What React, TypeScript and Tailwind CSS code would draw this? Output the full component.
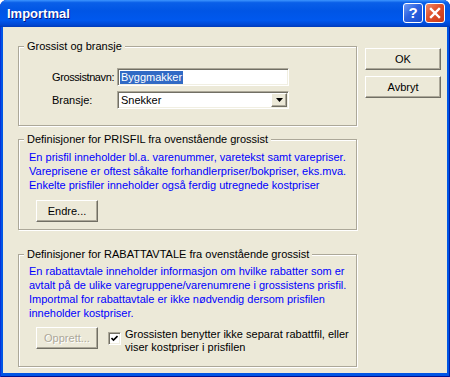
import React from 'react';

const face = 'bg-[#ECE9D8]';
const raised =
  'border border-t-white border-l-white border-b-[#716F64] border-r-[#716F64] shadow-[inset_-1px_-1px_0_#ACA899] bg-[#ECE9D8]';
const sunken =
  'border border-t-[#ACA899] border-l-[#ACA899] border-b-white border-r-white shadow-[inset_1px_1px_0_#716F64,inset_-1px_-1px_0_#F1EFE2] bg-white';

const Legend: React.FC<{ children: React.ReactNode }> = ({ children }) => (
  <span className={`-mt-[8px] ml-[5px] self-start px-[3px] leading-[14px] whitespace-nowrap ${face}`}>
    {children}
  </span>
);

const GroupBox: React.FC<{ label: React.ReactNode; className?: string; children: React.ReactNode }> = ({
  label,
  className = '',
  children,
}) => (
  <div
    className={`flex flex-col border border-[#ACA899] shadow-[inset_1px_1px_0_#fff,1px_1px_0_#fff] ${className}`}
  >
    <Legend>{label}</Legend>
    {children}
  </div>
);

const Button: React.FC<{ children: React.ReactNode; className?: string; disabled?: boolean }> = ({
  children,
  className = '',
  disabled,
}) => (
  <div
    className={`flex items-center justify-center h-[22px] ${raised} ${className} ${
      disabled ? 'text-[#ACA899] [text-shadow:1px_1px_0_#fff]' : 'text-black'
    }`}
  >
    {children}
  </div>
);

const TitleButton: React.FC<{ kind: 'help' | 'close' }> = ({ kind }) => (
  <div
    className={`w-[20px] h-[20px] rounded-[3px] border border-white flex items-center justify-center ${
      kind === 'help'
        ? 'bg-[linear-gradient(135deg,#6F9BF5_0%,#2D62E0_45%,#1A4ED0_100%)]'
        : 'bg-[linear-gradient(135deg,#F08B6A_0%,#E0502A_45%,#C8391A_100%)]'
    }`}
  >
    {kind === 'help' ? (
      <span className="text-white font-bold text-[15px] leading-none font-['Liberation_Sans',sans-serif]">?</span>
    ) : (
      <svg width="12" height="12" viewBox="0 0 12 12">
        <path d="M2 2 L10 10 M10 2 L2 10" stroke="white" strokeWidth="2.4" strokeLinecap="square" />
      </svg>
    )}
  </div>
);

export default function App() {
  return (
    <div className="w-[450px] h-[377px] flex flex-col rounded-t-[7px] overflow-hidden bg-[#0055E5] shadow-[inset_1px_0_0_#0831D9,inset_-1px_0_0_#001EA0,inset_0_-1px_0_#001090] font-['Liberation_Sans',Arial,sans-serif] text-[11px] text-black">
      {/* Title bar */}
      <div className="h-[27px] shrink-0 flex items-center pl-[7px] pr-[5px] bg-[linear-gradient(to_bottom,#3D95FF_0%,#0A5FE8_10%,#0055E5_40%,#0058EE_75%,#0047D3_92%,#003AB8_100%)]">
        <span className="text-white font-bold text-[13px] [text-shadow:1px_1px_0_#0A1883] flex-1">Importmal</span>
        <div className="flex gap-[2px] -mt-[2px]">
          <TitleButton kind="help" />
          <TitleButton kind="close" />
        </div>
      </div>

      {/* Client area */}
      <div className={`flex flex-1 mx-[3px] mb-[4px] pl-[15px] pt-[19px] ${face}`}>
        <div className="w-[339px] flex flex-col">
          <GroupBox label="Grossist og bransje" className="pb-[16px]">
            <div className="mt-[15px] pl-[33px] flex flex-col gap-[5px]">
              <div className="flex items-center">
                <span className="w-[65px] shrink-0 tracking-[-0.4px] whitespace-nowrap">Grossistnavn:</span>
                <div className={`w-[172px] h-[18px] flex items-center pl-[2px] ${sunken}`}>
                  <span className="bg-[#316AC5] text-white px-[1px] leading-[13px]">Byggmakker</span>
                </div>
              </div>
              <div className="flex items-center">
                <span className="w-[65px] shrink-0">Bransje:</span>
                <div className={`w-[172px] h-[18px] flex items-center pl-[3px] pr-[1px] ${sunken}`}>
                  <span className="flex-1">Snekker</span>
                  <div className={`w-[16px] h-[14px] flex items-center justify-center ${raised}`}>
                    <svg width="7" height="4" viewBox="0 0 7 4">
                      <polygon points="0,0 7,0 3.5,4" fill="black" />
                    </svg>
                  </div>
                </div>
              </div>
            </div>
          </GroupBox>

          <GroupBox label="Definisjoner for PRISFIL fra ovenstående grossist" className="mt-[13px] pb-[7px]">
            <p className="mt-[4px] pl-[10px] text-[#0000FF] leading-[14px] whitespace-nowrap">
              En prisfil inneholder bl.a. varenummer, varetekst samt varepriser.
              <br />
              Vareprisene er oftest såkalte forhandlerpriser/bokpriser, eks.mva.
              <br />
              Enkelte prisfiler inneholder også ferdig utregnede kostpriser
            </p>
            <div className="mt-[8px] pl-[17px]">
              <Button className="w-[62px]">Endre...</Button>
            </div>
          </GroupBox>

          <GroupBox label="Definisjoner for RABATTAVTALE fra ovenstående grossist" className="mt-[24px] pb-[12px]">
            <p className="mt-[3px] pl-[10px] text-[#0000FF] leading-[14px] whitespace-nowrap">
              En rabattavtale inneholder informasjon om hvilke rabatter som er
              <br />
              avtalt på de ulike varegruppene/varenumrene i grossistens prisfil.
              <br />
              Importmal for rabattavtale er ikke nødvendig dersom prisfilen
              <br />
              inneholder kostpriser.
            </p>
            <div className="mt-[7px] pl-[17px] flex items-start">
              <Button className="w-[62px]" disabled>
                Opprett...
              </Button>
              <div className={`ml-[10px] mt-[5px] w-[13px] h-[13px] flex items-center justify-center ${sunken}`}>
                <svg width="7" height="7" viewBox="0 0 7 7">
                  <path d="M0.5 3 L2.5 5 L6.5 1" stroke="black" strokeWidth="1.6" fill="none" />
                </svg>
              </div>
              <p className="ml-[4px] mt-[1px] leading-[13px] whitespace-nowrap">
                Grossisten benytter ikke separat rabattfil, eller
                <br />
                viser kostpriser i prisfilen
              </p>
            </div>
          </GroupBox>
        </div>

        <div className="ml-[8px] pt-[2px] flex flex-col gap-[6px]">
          <Button className="w-[76px]">OK</Button>
          <Button className="w-[76px]">Avbryt</Button>
        </div>
      </div>
    </div>
  );
}
